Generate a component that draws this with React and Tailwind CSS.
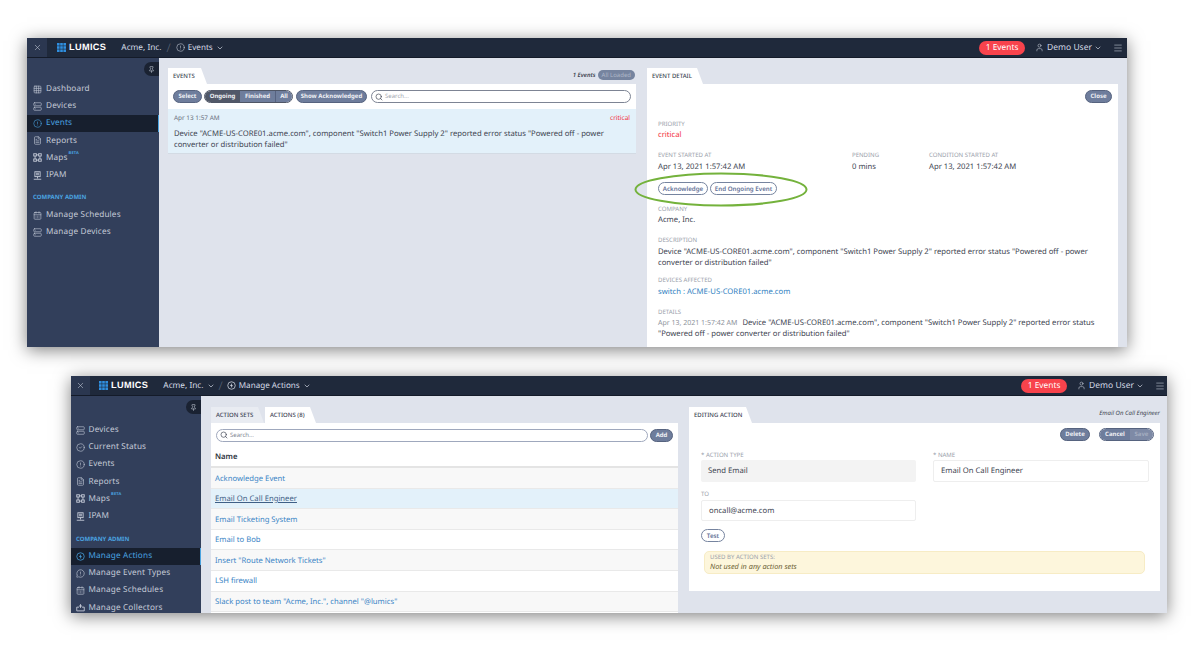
import React from "react";
import { X, Search, ChevronDown, User, Menu, Pin, CircleAlert, Server, Grid3x3, FileText, CalendarDays, CircleCheck, MessageCircleWarning } from "lucide-react";

const tabShape = "[clip-path:polygon(0_0,calc(100%-6px)_0,100%_100%,0_100%)]";

function CircleBolt({ size = 9, className = "" }) {
  return (
    <svg width={size} height={size} viewBox="0 0 24 24" fill="none" stroke="currentColor" strokeWidth="2" className={className}>
      <circle cx="12" cy="12" r="10" />
      <path d="M13.5 5.5 8 13h3.5l-1 5.5L16 11h-3.5z" fill="currentColor" stroke="none" />
    </svg>
  );
}

function MapsIcon({ size = 9, className = "" }) {
  return (
    <svg width={size} height={size} viewBox="0 0 24 24" fill="none" stroke="currentColor" strokeWidth="2.4" className={className}>
      <rect x="2" y="2" width="7" height="6" />
      <rect x="15" y="2" width="7" height="6" />
      <rect x="2" y="16" width="7" height="6" />
      <rect x="15" y="16" width="7" height="6" />
      <path d="M9 5h6M5.5 8v8M18.5 8v8M9 19h6" />
    </svg>
  );
}

function IpamIcon({ size = 9, className = "" }) {
  return (
    <svg width={size} height={size} viewBox="0 0 24 24" fill="none" stroke="currentColor" strokeWidth="2.4" className={className}>
      <rect x="5" y="2" width="14" height="13" />
      <path d="M8 6h8M8 10h8M12 15v5M2 22h20" />
    </svg>
  );
}

function CollectorIcon({ size = 9, className = "" }) {
  return (
    <svg width={size} height={size} viewBox="0 0 24 24" fill="none" stroke="currentColor" strokeWidth="2.4" className={className}>
      <path d="M2 11h6M16 11h6M2 11v10h20V11M12 3v10M8 8h8" />
    </svg>
  );
}

function Logo() {
  return (
    <div className="flex items-center gap-[3px]">
      <svg width="9" height="9" viewBox="0 0 9 9">
        {[0, 3.2, 6.4].map((x) => [0, 3.2, 6.4].map((y) => <rect key={x + "-" + y} x={x} y={y} width="2.6" height="2.6" fill="#2f8fe0" />))}
      </svg>
      <span className="font-['Liberation_Sans'] text-[9.2px] font-bold tracking-[0.35px] text-white">LUMICS</span>
    </div>
  );
}

function Header({ crumb, closeW, logoGap, acmeChevron, Icon, menuMr }) {
  return (
    <div className="flex h-[20px] shrink-0 items-center border-b border-b-[#141b29] bg-[#1f293b] text-[#d5dbe6]">
      <div className={`flex h-full ${closeW} items-center justify-center bg-[#2b3750]`}>
        <X size={9} strokeWidth={1.5} className="text-[#c3cad7]" />
      </div>
      <div className={logoGap}><Logo /></div>
      <span className="ml-[15px] pt-[2px] text-[8.3px]">Acme, Inc.</span>
      {acmeChevron && <ChevronDown size={8} className="ml-[3px]" />}
      <span className={`text-[12px] font-light text-[#5a6579] ${acmeChevron ? "mx-[4px]" : "mx-[5px]"}`}>/</span>
      <Icon size={9} strokeWidth={1.4} />
      <span className="ml-[3px] pt-[2px] text-[8.1px]">{crumb}</span>
      <ChevronDown size={8} className="ml-[3px]" />
      <div className="ml-auto flex items-center">
        <span className="flex h-[14px] w-[46px] items-center justify-center rounded-full bg-[#f8434c] pt-[1px] text-[8.3px] text-white">1 Events</span>
        <User size={9} strokeWidth={1.4} className="ml-[10px]" />
        <span className="ml-[3px] pt-[2px] text-[8.5px]">Demo User</span>
        <ChevronDown size={8} className="ml-[2px]" />
        <Menu size={10} strokeWidth={1.4} className={`ml-[11px] ${menuMr} text-[#c3cad7]`} />
      </div>
    </div>
  );
}

function NavItem({ Icon, label, active, beta, iconPad, iconGap }) {
  return (
    <div className={`flex h-[17.2px] items-center ${iconPad} text-[8.2px] tracking-[0.15px] ${active ? "border-r border-r-[#4aa3e0] bg-[#171f2e] text-[#4aa3e0]" : "text-[#c5cbd8]"}`}>
      <Icon size={9} strokeWidth={1.6} className={`${iconGap} shrink-0`} />
      <span className="whitespace-nowrap">{label}</span>
      {beta && <sup className="ml-[1px] -translate-y-[2px] text-[4px] font-bold text-[#4aa3e0]">BETA</sup>}
    </div>
  );
}

function Sidebar({ width, items, admin, navTop, adminTop, adminBottom, iconPad, iconGap }) {
  return (
    <div className={`flex ${width} shrink-0 flex-col bg-[#323f5b]`}>
      <div className="flex justify-end pt-[4px]">
        <div className="flex h-[14px] w-[15px] items-center justify-center rounded-l-full bg-[#1a2232]">
          <Pin size={7} className="text-[#c5cbd8]" />
        </div>
      </div>
      <div className={`${navTop} flex flex-col`}>
        {items.map((i) => <NavItem key={i.label} {...i} iconPad={iconPad} iconGap={iconGap} />)}
      </div>
      <div className={`${adminTop} ${adminBottom} ${iconPad} whitespace-nowrap text-[6px] font-bold text-[#4aa3e0]`}>COMPANY ADMIN</div>
      <div className="flex flex-col">
        {admin.map((i) => <NavItem key={i.label} {...i} iconPad={iconPad} iconGap={iconGap} />)}
      </div>
    </div>
  );
}

function Tab({ children, muted, className = "" }) {
  return (
    <div className={`flex h-[16px] items-center whitespace-nowrap pl-[5px] pr-[6px] text-[6px] font-medium text-[#3b4352] ${tabShape} ${muted ? "bg-[#e9ecf2]" : "bg-white"} ${className}`}>
      {children}
    </div>
  );
}

function Btn({ children, className = "" }) {
  return <span className={`flex h-[13px] items-center justify-center whitespace-nowrap rounded-full border border-[#56637f] bg-[#6e7d9c] text-[6px] font-bold text-[#eef0f5] ${className}`}>{children}</span>;
}

function OutlineBtn({ children, className = "" }) {
  return <span className={`flex h-[13px] items-center justify-center whitespace-nowrap rounded-full border border-[#76849f] bg-white text-[6.2px] font-semibold text-[#5f7096] ${className}`}>{children}</span>;
}

function Label({ children, className = "" }) {
  return <div className={`whitespace-nowrap text-[6.05px] leading-[9px] text-[#9ba1ab] ${className}`}>{children}</div>;
}

const txt = "text-[7.7px] leading-[11px] text-[#3c4350]";
const desc = `Device "ACME-US-CORE01.acme.com", component "Switch1 Power Supply 2" reported error status "Powered off - power converter or distribution failed"`;

function EventsWindow() {
  return (
    <div className="ml-[27px] mt-[38px] flex h-[309px] w-[1100px] flex-col overflow-hidden shadow-[0_3px_16px_rgba(0,0,0,0.5)]">
      <Header crumb="Events" closeW="w-[20px]" logoGap="ml-[10px]" Icon={CircleAlert} menuMr="mr-[4px]" />
      <div className="flex min-h-0 flex-1">
        <Sidebar
          width="w-[132px]" navTop="mt-[4.5px]" adminTop="mt-[9px]" adminBottom="mb-[5px]" iconPad="pl-[6px]" iconGap="mr-[4px]"
          items={[
            { Icon: Grid3x3, label: "Dashboard" },
            { Icon: Server, label: "Devices" },
            { Icon: CircleAlert, label: "Events", active: true },
            { Icon: FileText, label: "Reports" },
            { Icon: MapsIcon, label: "Maps", beta: true },
            { Icon: IpamIcon, label: "IPAM" },
          ]}
          admin={[
            { Icon: CalendarDays, label: "Manage Schedules" },
            { Icon: Server, label: "Manage Devices" },
          ]}
        />
        <div className="flex flex-1 gap-[11px] bg-[#dfe3ec] pl-[9px] pr-[9px] pt-[10px]">
          <div className="flex w-[468px] flex-col">
            <div className="flex items-center justify-between">
              <Tab className="w-[39px]">EVENTS</Tab>
              <div className="flex items-center gap-[2px] pb-[2px]">
                <span className="text-[6px] font-semibold italic text-[#3c4350]">1 Events</span>
                <span className="mr-[1px] flex h-[10px] items-center rounded-full bg-[#76849f] px-[4px] text-[6px] text-[#aeb7c8]">All Loaded</span>
              </div>
            </div>
            <div className="flex h-[25px] items-center bg-white px-[5px]">
              <Btn className="w-[29px]">Select</Btn>
              <div className="ml-[2px] flex h-[13px] items-stretch overflow-hidden rounded-full border border-[#4f5666] text-[6px] font-bold text-[#eef0f5]">
                <span className="flex w-[35px] items-center justify-center bg-[#515868]">Ongoing</span>
                <span className="flex w-[35px] items-center justify-center bg-[#6e7d9c]">Finished</span>
                <span className="flex w-[17px] items-center justify-center border-l border-l-[#566280] bg-[#6e7d9c]">All</span>
              </div>
              <Btn className="ml-[3px] w-[71px]">Show Acknowledged</Btn>
              <div className="ml-[4px] flex h-[13px] flex-1 items-center rounded-full border border-[#7d8494] pl-[3px]">
                <Search size={8} className="text-[#3c4350]" />
                <span className="ml-[2px] text-[6px] text-[#a0a5ae]">Search...</span>
              </div>
            </div>
            <div className="h-[45px] border-b border-b-[#d3dbe4] bg-[#e3f1fa] px-[6px] pt-[4px]">
              <div className="flex items-center justify-between">
                <span className="text-[6.4px] text-[#646b78]">Apr 13 1:57 AM</span>
                <span className="text-[6.5px] text-[#f3303b]">critical</span>
              </div>
              <div className={`mt-[6px] ${txt}`}>{desc}</div>
            </div>
          </div>
          <div className="flex w-[471px] flex-col">
            <Tab className="w-[56px]">EVENT DETAIL</Tab>
            <div className="relative flex-1 bg-white px-[11px] pt-[6px]">
              <div className="flex justify-end">
                <Btn className="-mr-[5px] w-[27px]">Close</Btn>
              </div>
              <Label className="mt-[17px]">PRIORITY</Label>
              <div className="mt-[1px] text-[7.7px] leading-[11px] text-[#f3303b]">critical</div>
              <div className="mt-[10px] flex">
                <div className="w-[194px]">
                  <Label>EVENT STARTED AT</Label>
                  <div className={`mt-[2px] ${txt}`}>Apr 13, 2021 1:57:42 AM</div>
                </div>
                <div className="w-[77px]">
                  <Label>PENDING</Label>
                  <div className={`mt-[2px] ${txt}`}>0 mins</div>
                </div>
                <div>
                  <Label>CONDITION STARTED AT</Label>
                  <div className={`mt-[2px] ${txt}`}>Apr 13, 2021 1:57:42 AM</div>
                </div>
              </div>
              <div className="mt-[9px] flex gap-[2px]">
                <OutlineBtn className="w-[50px]">Acknowledge</OutlineBtn>
                <OutlineBtn className="w-[67px]">End Ongoing Event</OutlineBtn>
              </div>
              <Label className="mt-[9.5px]">COMPANY</Label>
              <div className={`mt-[1.5px] ${txt}`}>Acme, Inc.</div>
              <Label className="mt-[10px]">DESCRIPTION</Label>
              <div className={`mt-[2px] ${txt}`}>{desc}</div>
              <Label className="mt-[7px]">DEVICES AFFECTED</Label>
              <div className="mt-[1.5px] text-[7.7px] leading-[11px] text-[#2f7fc1]">switch : ACME-US-CORE01.acme.com</div>
              <Label className="mt-[10px]">DETAILS</Label>
              <div className={`mt-[1.5px] ${txt}`}>
                <span className="mr-[5px] text-[7px] text-[#8e939c]">Apr 13, 2021 1:57:42 AM</span>
                {desc}
              </div>
              <svg className="absolute left-[-13px] top-[88px]" width="174" height="35" viewBox="0 0 174 35">
                <ellipse cx="87" cy="17.5" rx="85.5" ry="16" fill="none" stroke="#74b23c" strokeWidth="2" />
              </svg>
            </div>
          </div>
        </div>
      </div>
    </div>
  );
}

const rows = [
  { t: "Acknowledge Event", bg: "bg-[#f8f8f8]" },
  { t: "Email On Call Engineer", bg: "bg-[#e3f1fa]", sel: true },
  { t: "Email Ticketing System", bg: "bg-[#f8f8f8]" },
  { t: "Email to Bob", bg: "bg-white" },
  { t: 'Insert "Route Network Tickets"', bg: "bg-[#f8f8f8]" },
  { t: "LSH firewall", bg: "bg-white" },
  { t: 'Slack post to team "Acme, Inc.", channel "@lumics"', bg: "bg-[#f8f8f8]" },
];

function ActionsWindow() {
  return (
    <div className="ml-[71px] mt-[29px] flex h-[237px] w-[1096px] flex-col overflow-hidden shadow-[0_3px_16px_rgba(0,0,0,0.5)]">
      <Header crumb="Manage Actions" closeW="w-[19px]" logoGap="ml-[9px]" acmeChevron Icon={CircleBolt} menuMr="mr-[2px]" />
      <div className="flex min-h-0 flex-1">
        <Sidebar
          width="w-[130px]" navTop="mt-[7.5px]" adminTop="mt-[10px]" adminBottom="mb-[4px]" iconPad="pl-[5px]" iconGap="mr-[3.5px]"
          items={[
            { Icon: Server, label: "Devices" },
            { Icon: CircleCheck, label: "Current Status" },
            { Icon: CircleAlert, label: "Events" },
            { Icon: FileText, label: "Reports" },
            { Icon: MapsIcon, label: "Maps", beta: true },
            { Icon: IpamIcon, label: "IPAM" },
          ]}
          admin={[
            { Icon: CircleBolt, label: "Manage Actions", active: true },
            { Icon: MessageCircleWarning, label: "Manage Event Types" },
            { Icon: CalendarDays, label: "Manage Schedules" },
            { Icon: CollectorIcon, label: "Manage Collectors" },
          ]}
        />
        <div className="flex flex-1 gap-[11px] bg-[#dfe3ec] pl-[10px] pr-[7px] pt-[11px]">
          <div className="flex w-[467px] flex-col">
            <div className="flex">
              <Tab muted className="w-[53px]">ACTION SETS</Tab>
              <Tab className="ml-[1px] w-[51px]">ACTIONS (8)</Tab>
            </div>
            <div className="flex flex-1 flex-col overflow-hidden bg-white">
              <div className="flex h-[24px] shrink-0 items-center gap-[2px] px-[5px]">
                <div className="flex h-[13px] flex-1 items-center rounded-full border border-[#9fa8bd] pl-[3px]">
                  <Search size={8} className="text-[#3c4350]" />
                  <span className="ml-[2px] text-[6px] text-[#7e8490]">Search...</span>
                </div>
                <Btn className="w-[23px]">Add</Btn>
              </div>
              <div className="flex h-[21px] shrink-0 items-center border-b-2 border-b-[#e4e4e4] pl-[4px] pt-[3px] text-[7.7px] font-semibold text-[#2e333d]">Name</div>
              {rows.map((r) => (
                <div key={r.t} className={`flex h-[20.6px] shrink-0 items-center border-b border-b-[#e9e9e9] pl-[4px] pt-[3px] text-[7.7px] ${r.bg} ${r.sel ? "text-[#3f5f86] underline" : "text-[#3a85c6]"}`}>{r.t}</div>
              ))}
            </div>
          </div>
          <div className="flex w-[471px] flex-col pb-[22px]">
            <div className="flex items-start justify-between">
              <Tab className="w-[63px]">EDITING ACTION</Tab>
              <span className="pt-[2px] text-[6px] italic text-[#3c4350]">Email On Call Engineer</span>
            </div>
            <div className="flex-1 bg-white px-[12px] pt-[5px]">
              <div className="flex justify-end gap-[9px]">
                <Btn className="w-[30px]">Delete</Btn>
                <div className="-mr-[6px] flex h-[13px] w-[55px] overflow-hidden rounded-full border border-[#56637f] text-[6px] font-bold">
                  <span className="flex w-[30px] items-center justify-center bg-[#6e7d9c] text-[#eef0f5]">Cancel</span>
                  <span className="flex flex-1 items-center justify-center bg-[#7e8aa6] text-[#a4adc0]">Save</span>
                </div>
              </div>
              <div className="mt-[10px] grid grid-cols-[215px_216px] gap-x-[17px]">
                <div>
                  <Label>* ACTION TYPE</Label>
                  <div className="flex h-[22px] items-center rounded-[2px] bg-[#f3f3f3] pl-[7px] pt-[2px] text-[7.7px] text-[#3c4350]">Send Email</div>
                </div>
                <div>
                  <Label>* NAME</Label>
                  <div className="flex h-[22px] items-center rounded-[2px] border border-[#eeeeee] pl-[7px] pt-[2px] text-[7.7px] text-[#3c4350]">Email On Call Engineer</div>
                </div>
                <div className="mt-[8px]">
                  <Label>TO</Label>
                  <div className="mt-[1px] flex h-[21px] items-center rounded-[2px] border border-[#eeeeee] pl-[7px] pt-[2px] text-[7.7px] text-[#3c4350]">oncall@acme.com</div>
                </div>
              </div>
              <OutlineBtn className="mt-[8px] w-[24px]">Test</OutlineBtn>
              <div className="mx-[3px] mt-[9px] h-[23px] rounded-[5px] border border-[#f7ecc5] bg-[#fdf6dc] pl-[5px] pt-[1px]">
                <Label className="text-[#8f8a78]">USED BY ACTION SETS:</Label>
                <div className="text-[7.3px] italic leading-[10px] text-[#6f6436]">Not used in any action sets</div>
              </div>
            </div>
          </div>
        </div>
      </div>
    </div>
  );
}

export default function App() {
  return (
    <div className="h-[654px] w-[1200px] overflow-hidden bg-white font-['Noto_Sans',sans-serif] [text-rendering:geometricPrecision]">
      <EventsWindow />
      <ActionsWindow />
    </div>
  );
}
